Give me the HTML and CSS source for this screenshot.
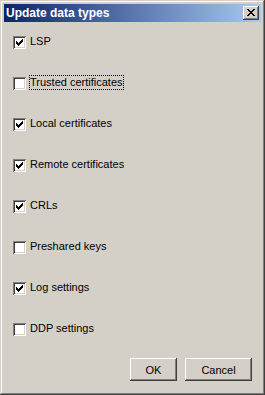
FILE: index.html
```html
<!DOCTYPE html>
<html>
<head>
<meta charset="utf-8">
<link rel="stylesheet" href="styles.css">
</head>
<body>
<div class="window">
  <div class="titlebar">
    <span class="title">Update data types</span>
    <span class="close"><svg width="8" height="7" viewBox="0 0 8 7" shape-rendering="crispEdges"><path d="M0 0h2v1h-2zM6 0h2v1h-2zM1 1h2v1h-2zM5 1h2v1h-2zM2 2h4v1h-4zM3 3h2v1h-2zM2 4h4v1h-4zM1 5h2v1h-2zM5 5h2v1h-2zM0 6h2v1h-2zM6 6h2v1h-2z" fill="#000"/></svg></span>
  </div>
  <div class="content">
    <div class="list">
      <div class="row"><span class="cb"><svg class="check" width="13" height="13" viewBox="0 0 13 13" shape-rendering="crispEdges"><path d="M9 3h1v1h-1zM8 4h2v1h-2zM3 5h1v1h-1zM7 5h3v1h-3zM3 6h2v1h-2zM6 6h3v1h-3zM3 7h5v1h-5zM4 8h3v1h-3zM5 9h1v1h-1z" fill="#000"/></svg></span><span class="label">LSP</span></div>
      <div class="row"><span class="cb"></span><span class="label focus">Trusted certificates</span></div>
      <div class="row"><span class="cb"><svg class="check" width="13" height="13" viewBox="0 0 13 13" shape-rendering="crispEdges"><path d="M9 3h1v1h-1zM8 4h2v1h-2zM3 5h1v1h-1zM7 5h3v1h-3zM3 6h2v1h-2zM6 6h3v1h-3zM3 7h5v1h-5zM4 8h3v1h-3zM5 9h1v1h-1z" fill="#000"/></svg></span><span class="label">Local certificates</span></div>
      <div class="row"><span class="cb"><svg class="check" width="13" height="13" viewBox="0 0 13 13" shape-rendering="crispEdges"><path d="M9 3h1v1h-1zM8 4h2v1h-2zM3 5h1v1h-1zM7 5h3v1h-3zM3 6h2v1h-2zM6 6h3v1h-3zM3 7h5v1h-5zM4 8h3v1h-3zM5 9h1v1h-1z" fill="#000"/></svg></span><span class="label">Remote certificates</span></div>
      <div class="row"><span class="cb"><svg class="check" width="13" height="13" viewBox="0 0 13 13" shape-rendering="crispEdges"><path d="M9 3h1v1h-1zM8 4h2v1h-2zM3 5h1v1h-1zM7 5h3v1h-3zM3 6h2v1h-2zM6 6h3v1h-3zM3 7h5v1h-5zM4 8h3v1h-3zM5 9h1v1h-1z" fill="#000"/></svg></span><span class="label">CRLs</span></div>
      <div class="row"><span class="cb"></span><span class="label">Preshared keys</span></div>
      <div class="row"><span class="cb"><svg class="check" width="13" height="13" viewBox="0 0 13 13" shape-rendering="crispEdges"><path d="M9 3h1v1h-1zM8 4h2v1h-2zM3 5h1v1h-1zM7 5h3v1h-3zM3 6h2v1h-2zM6 6h3v1h-3zM3 7h5v1h-5zM4 8h3v1h-3zM5 9h1v1h-1z" fill="#000"/></svg></span><span class="label">Log settings</span></div>
      <div class="row"><span class="cb"></span><span class="label">DDP settings</span></div>
    </div>
    <div class="footer">
      <button class="btn ok">OK</button>
      <button class="btn cancel">Cancel</button>
    </div>
  </div>
</div>
</body>
</html>
```
FILE: styles.css
```css
html, body {
  margin: 0;
  padding: 0;
  background: #d4d0c8;
}
.window {
  width: 265px;
  height: 395px;
  box-sizing: border-box;
  padding: 4px;
  background: #d4d0c8;
  box-shadow: inset -1px -1px #404040, inset 1px 1px #d4d0c8, inset -2px -2px #808080, inset 2px 2px #ffffff;
  display: flex;
  flex-direction: column;
  font-family: "Liberation Sans", Arial, sans-serif;
  font-size: 11px;
  color: #000;
}
.titlebar {
  height: 18px;
  background: linear-gradient(to right, #0a246a, #a6caf0);
  display: flex;
  align-items: center;
  justify-content: space-between;
  padding: 0 2px;
}
.title {
  color: #fff;
  font-weight: bold;
  font-size: 12px;
  line-height: 18px;
}
.close {
  width: 16px;
  height: 14px;
  box-sizing: border-box;
  background: #d4d0c8;
  box-shadow: inset -1px -1px #404040, inset 1px 1px #ffffff, inset -2px -2px #808080, inset 2px 2px #d4d0c8;
  display: flex;
  align-items: center;
  justify-content: center;
  padding: 0 1px 1px 0;
}
.close svg {
  display: block;
}
.content {
  flex: 1;
  display: flex;
  flex-direction: column;
  padding: 14px 9px 10px 9px;
}
.list {
  display: flex;
  flex-direction: column;
  gap: 28px;
}
.row {
  display: flex;
  align-items: flex-end;
  height: 13px;
}
.cb {
  width: 13px;
  height: 13px;
  flex: none;
  background: #fff;
  box-shadow: inset 1px 1px #808080, inset -1px -1px #ffffff, inset 2px 2px #404040, inset -2px -2px #d4d0c8;
  position: relative;
}
.check {
  display: block;
}
.label {
  margin-left: 3px;
  padding: 1px 1px;
  line-height: 13px;
  white-space: nowrap;
}
.focus {
  outline: 1px dotted #000;
  outline-offset: -1px;
}
.footer {
  margin-top: auto;
  display: flex;
  justify-content: flex-end;
  gap: 8px;
}
.btn {
  height: 23px;
  box-sizing: border-box;
  border: none;
  margin: 0;
  padding: 0;
  background: #d4d0c8;
  box-shadow: inset -1px -1px #404040, inset 1px 1px #ffffff, inset -2px -2px #808080, inset 2px 2px #d4d0c8;
  font-family: "Liberation Sans", Arial, sans-serif;
  font-size: 11px;
  color: #000;
}
.ok {
  width: 47px;
}
.cancel {
  width: 67px;
}
```
